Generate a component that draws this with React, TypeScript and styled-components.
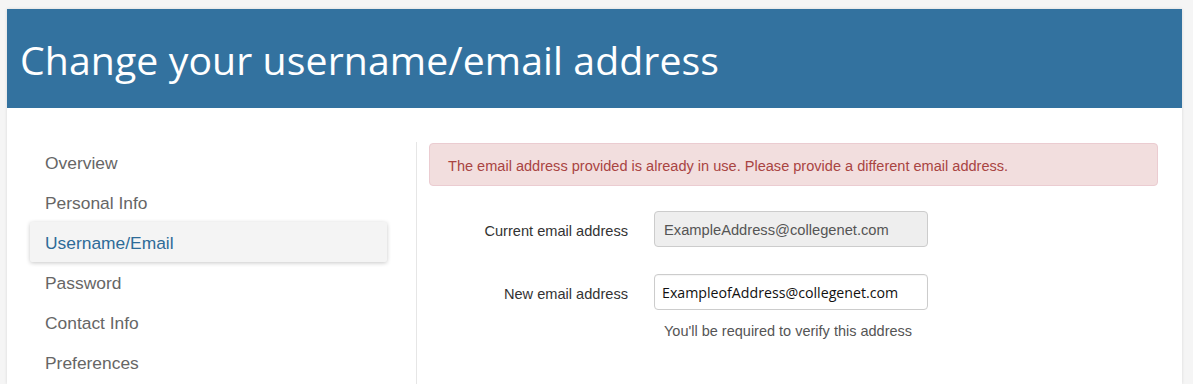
import React from "react";
import styled, { createGlobalStyle } from "styled-components";

const GlobalStyle = createGlobalStyle`
  html, body { margin: 0; padding: 0; background: #f5f5f5; }
  body { font-family: "Liberation Sans", Arial, sans-serif; }
  * { box-sizing: border-box; }
`;

const Page = styled.div`
  padding: 9px 11px 0 7px;
  height: 384px;
  overflow: hidden;
`;

const Card = styled.div`
  background: #fff;
  box-shadow: 0 0 3px rgba(0, 0, 0, 0.12);
  height: 375px;
`;

const Header = styled.header`
  background: #33729f;
  height: 99px;
  display: flex;
  align-items: center;
  padding: 2px 0 0 13px;
`;

const Title = styled.h1`
  margin: 0;
  color: #fff;
  font-family: "Open Sans", sans-serif;
  font-weight: 400;
  font-size: 39.2px;
  letter-spacing: 0.1px;
`;

const Body = styled.div`
  display: grid;
  grid-template-columns: 409px 1fr;
  padding-top: 34px;
`;

const Nav = styled.nav`
  display: flex;
  flex-direction: column;
  padding-left: 23px;
  padding-right: 29px;
`;

const NavItem = styled.div<{ $active?: boolean }>`
  height: 40px;
  display: flex;
  align-items: center;
  padding: 2px 0 0 15px;
  font-size: 17.4px;
  color: ${(p) => (p.$active ? "#2e6b98" : "#666")};
  background: ${(p) => (p.$active ? "#f4f4f4" : "transparent")};
  box-shadow: ${(p) => (p.$active ? "0 1px 4px rgba(0,0,0,0.22)" : "none")};
  border-radius: 2px;
`;

const Content = styled.main`
  border-left: 1px solid #e6e6e6;
  padding: 1px 24px 0 12px;
  min-height: 260px;
`;

const Alert = styled.div`
  background: #f2dede;
  border: 1px solid #ebccd1;
  border-radius: 4px;
  color: #a94442;
  font-size: 14.55px;
  height: 43px;
  display: flex;
  align-items: center;
  padding: 2px 0 0 18px;
`;

const Form = styled.div`
  display: grid;
  grid-template-columns: 199px 274px;
  column-gap: 26px;
  row-gap: 27px;
  margin-top: 25px;
  align-items: start;
`;

const Label = styled.label`
  font-size: 14.6px;
  color: #333;
  text-align: right;
  height: 36px;
  line-height: 36px;
  padding-top: 2px;
`;

const Field = styled.div`
  display: flex;
  flex-direction: column;
`;

const Input = styled.div<{ $disabled?: boolean }>`
  height: 36px;
  border: 1px solid #ccc;
  border-radius: 4px;
  background: ${(p) => (p.$disabled ? "#eee" : "#fff")};
  color: ${(p) => (p.$disabled ? "#555" : "#111")};
  font-family: ${(p) =>
    p.$disabled ? `"Liberation Sans", Arial, sans-serif` : `"Open Sans", sans-serif`};
  font-size: ${(p) => (p.$disabled ? "14.7px" : "14.2px")};
  display: flex;
  align-items: center;
  padding: ${(p) => (p.$disabled ? "2px 0 0 9px" : "1px 0 0 7px")};
  box-shadow: ${(p) => (p.$disabled ? "none" : "inset 0 1px 1px rgba(0,0,0,0.04)")};
`;

const Help = styled.div`
  margin-top: 13px;
  padding-left: 10px;
  font-size: 14.5px;
  color: #555;
`;

const navItems = [
  "Overview",
  "Personal Info",
  "Username/Email",
  "Password",
  "Contact Info",
  "Preferences",
];

export default function App() {
  return (
    <>
      <GlobalStyle />
      <Page>
        <Card>
          <Header>
            <Title>Change your username/email address</Title>
          </Header>
          <Body>
            <Nav>
              {navItems.map((n) => (
                <NavItem key={n} $active={n === "Username/Email"}>
                  {n}
                </NavItem>
              ))}
            </Nav>
            <Content>
              <Alert>
                The email address provided is already in use. Please provide a different email address.
              </Alert>
              <Form>
                <Label>Current email address</Label>
                <Field>
                  <Input $disabled>ExampleAddress@collegenet.com</Input>
                </Field>
                <Label>New email address</Label>
                <Field>
                  <Input>ExampleofAddress@collegenet.com</Input>
                  <Help>You'll be required to verify this address</Help>
                </Field>
              </Form>
            </Content>
          </Body>
        </Card>
      </Page>
    </>
  );
}
